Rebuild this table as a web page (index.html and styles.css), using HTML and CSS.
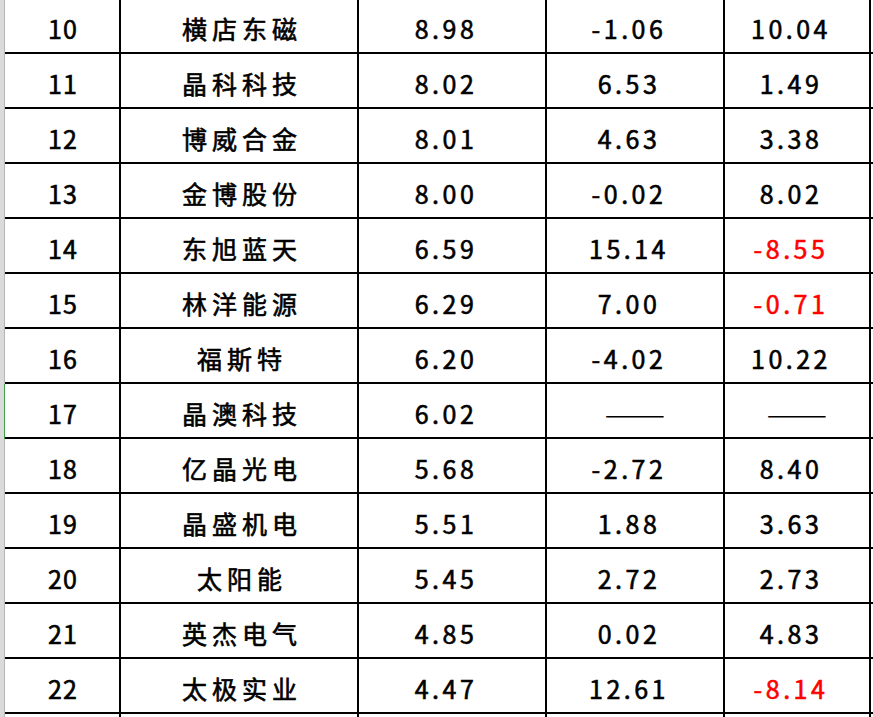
FILE: index.html
```html
<!DOCTYPE html>
<html lang="zh">
<head>
<meta charset="utf-8">
<link rel="stylesheet" href="styles.css">
</head>
<body>
<div class="sheet">
  <div class="row"><div class="gut"></div><div class="gline"></div><div class="c n">10</div><div class="c name">横店东磁</div><div class="c v">8.98</div><div class="c v">-1.06</div><div class="c v">10.04</div><div class="fill"></div></div>
  <div class="row"><div class="gut"></div><div class="gline"></div><div class="c n">11</div><div class="c name">晶科科技</div><div class="c v">8.02</div><div class="c v">6.53</div><div class="c v">1.49</div><div class="fill"></div></div>
  <div class="row"><div class="gut"></div><div class="gline"></div><div class="c n">12</div><div class="c name">博威合金</div><div class="c v">8.01</div><div class="c v">4.63</div><div class="c v">3.38</div><div class="fill"></div></div>
  <div class="row"><div class="gut"></div><div class="gline"></div><div class="c n">13</div><div class="c name">金博股份</div><div class="c v">8.00</div><div class="c v">-0.02</div><div class="c v">8.02</div><div class="fill"></div></div>
  <div class="row"><div class="gut"></div><div class="gline"></div><div class="c n">14</div><div class="c name">东旭蓝天</div><div class="c v">6.59</div><div class="c v">15.14</div><div class="c v neg">-8.55</div><div class="fill"></div></div>
  <div class="row"><div class="gut"></div><div class="gline"></div><div class="c n">15</div><div class="c name">林洋能源</div><div class="c v">6.29</div><div class="c v">7.00</div><div class="c v neg">-0.71</div><div class="fill"></div></div>
  <div class="row"><div class="gut"></div><div class="gline"></div><div class="c n">16</div><div class="c name">福斯特</div><div class="c v">6.20</div><div class="c v">-4.02</div><div class="c v">10.22</div><div class="fill"></div></div>
  <div class="row"><div class="gut"></div><div class="gline sel"></div><div class="c n">17</div><div class="c name">晶澳科技</div><div class="c v">6.02</div><div class="c v"><span class="dash">——</span></div><div class="c v"><span class="dash">——</span></div><div class="fill"></div></div>
  <div class="row"><div class="gut"></div><div class="gline"></div><div class="c n">18</div><div class="c name">亿晶光电</div><div class="c v">5.68</div><div class="c v">-2.72</div><div class="c v">8.40</div><div class="fill"></div></div>
  <div class="row"><div class="gut"></div><div class="gline"></div><div class="c n">19</div><div class="c name">晶盛机电</div><div class="c v">5.51</div><div class="c v">1.88</div><div class="c v">3.63</div><div class="fill"></div></div>
  <div class="row"><div class="gut"></div><div class="gline"></div><div class="c n">20</div><div class="c name">太阳能</div><div class="c v">5.45</div><div class="c v">2.72</div><div class="c v">2.73</div><div class="fill"></div></div>
  <div class="row"><div class="gut"></div><div class="gline"></div><div class="c n">21</div><div class="c name">英杰电气</div><div class="c v">4.85</div><div class="c v">0.02</div><div class="c v">4.83</div><div class="fill"></div></div>
  <div class="row"><div class="gut"></div><div class="gline"></div><div class="c n">22</div><div class="c name">太极实业</div><div class="c v">4.47</div><div class="c v">12.61</div><div class="c v neg">-8.14</div><div class="fill"></div></div>
  <div class="row"><div class="gut"></div><div class="gline"></div><div class="c n"></div><div class="c name"></div><div class="c v"></div><div class="c v"></div><div class="c v"></div><div class="fill"></div></div>
</div>
</body>
</html>
```

FILE: styles.css
```css
html, body {
  margin: 0;
  padding: 0;
  background: #fff;
  overflow: hidden;
}
.sheet {
  margin-top: -1px;
  width: 873px;
  height: 718px;
  overflow: hidden;
  font-family: "Noto Sans CJK SC", "Noto Sans", sans-serif;
  font-size: 25px;
  font-weight: 400;
  -webkit-text-stroke: 0.6px currentColor;
  color: #000;
}
.row {
  display: grid;
  grid-template-columns: 4px 1px 116px 238px 188px 178px 146px 2px;
  height: 55px;
}
.gut {
  background: #dadada;
}
.gline {
  background: #b5b5b5;
}
.gline.sel {
  background: #3fa34d;
}
.c {
  box-sizing: border-box;
  border-right: 2px solid #000;
  border-bottom: 2px solid #000;
  display: flex;
  align-items: center;
  justify-content: center;
  padding-top: 5px;
  line-height: 1;
  white-space: nowrap;
}
.c.n {
  letter-spacing: 1px;
  padding-left: 2px;
}
.c.name {
  letter-spacing: 5px;
  padding-left: 6px;
}
.c.v {
  letter-spacing: 3.5px;
  padding-right: 12px;
}
.dash {
  display: inline-block;
  margin-left: 12px;
  letter-spacing: 0;
  -webkit-text-stroke: 0;
  transform: scaleX(1.45);
}
.neg {
  color: #f00;
}
.fill {
  box-sizing: border-box;
  border-bottom: 2px solid #000;
}
```
